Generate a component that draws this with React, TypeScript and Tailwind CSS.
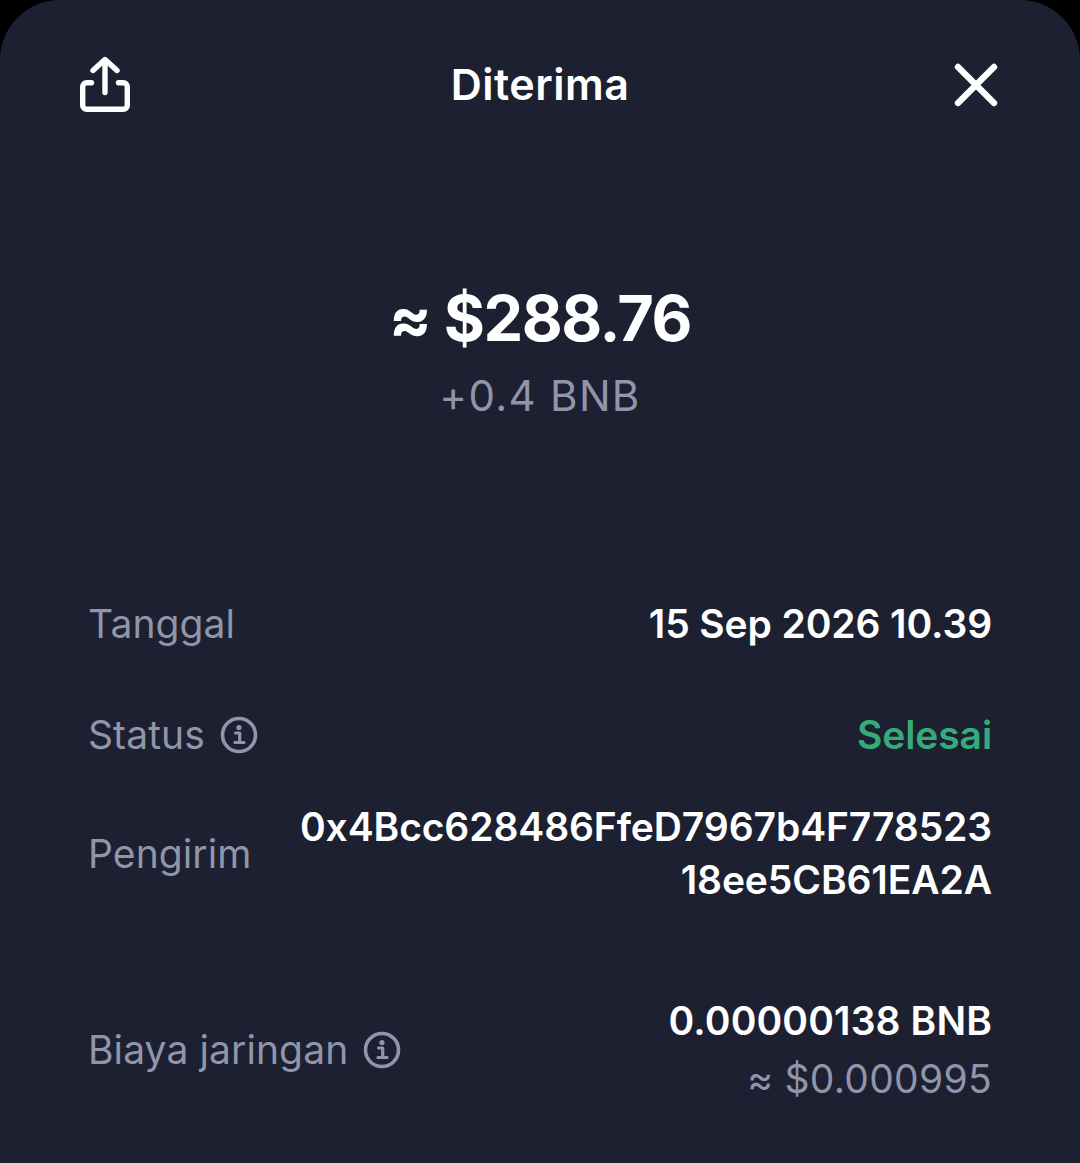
function InfoIcon() {
  return (
    <svg width="38" height="38" viewBox="0 0 38 38" fill="none" className="shrink-0">
      <circle cx="19" cy="19" r="16.5" stroke="#9095a9" strokeWidth="3.6" />
      <circle cx="19" cy="11.5" r="2.6" fill="#9095a9" />
      <path d="M15.5 17h4.2v9M15 26.5h9" stroke="#9095a9" strokeWidth="3.2" strokeLinecap="round" strokeLinejoin="round" />
    </svg>
  );
}

function Row({ className, label, info, children }: { className: string; label: string; info?: boolean; children: React.ReactNode }) {
  return (
    <div className={`flex items-center justify-between ${className}`}>
      <div className="flex items-center gap-[15px] whitespace-nowrap tracking-[0.1px] text-[#9095a9]">
        <span>{label}</span>
        {info && <InfoIcon />}
      </div>
      {children}
    </div>
  );
}

export default function App() {
  return (
    <div className="h-[1163px] w-[1080px] overflow-hidden bg-black font-['Inter',sans-serif]">
      <div className="h-[1200px] rounded-t-[60px] bg-[#1c2031] px-[88px] text-[39px] leading-[53px] tracking-[-0.1px]">
        <header className="-mx-[10px] grid h-[170px] grid-cols-[1fr_auto_1fr] items-center">
          <svg width="54" height="58" viewBox="0 0 54 58" fill="none" stroke="#ffffff" strokeWidth="5.4" strokeLinecap="round" strokeLinejoin="round">
            <path d="M27 36.5V4.5M15 14.5L27 3.5l12 11" />
            <path d="M13.5 26.7H8.7a4 4 0 0 0-4 4v18.6a4 4 0 0 0 4 4h36.6a4 4 0 0 0 4-4V30.7a4 4 0 0 0-4-4h-4.8" />
          </svg>
          <h1 className="-mt-[2px] text-[43px] font-semibold tracking-[0.5px] text-white">Diterima</h1>
          <svg width="46" height="46" viewBox="0 0 46 46" fill="none" stroke="#ffffff" strokeWidth="6.4" strokeLinecap="round" className="mr-[3px] justify-self-end">
            <path d="M5 5l36 36M41 5L5 41" />
          </svg>
        </header>

        <section className="mt-[110px] flex flex-col items-center">
          <div className="text-[63px] font-bold leading-[76px] tracking-[-1.5px] text-white">≈ $288.76</div>
          <div className="mt-[15px] text-[42px] leading-[50px] tracking-[1.3px] text-[#9095a9]">+0.4 BNB</div>
        </section>

        <section className="mt-[176px]">
          <Row className="h-[53px]" label="Tanggal">
            <span className="font-semibold text-white">15 Sep 2026 10.39</span>
          </Row>
          <Row className="mt-[58px] h-[53px]" label="Status" info>
            <span className="font-semibold text-[#35ab79]">Selesai</span>
          </Row>
          <Row className="mt-[39px]" label="Pengirim">
            <span className="w-[700px] break-all text-right font-semibold text-white">0x4Bcc628486FfeD7967b4F77852318ee5CB61EA2A</span>
          </Row>
          <Row className="mt-[88px]" label="Biaya jaringan" info>
            <div className="flex flex-col items-end font-semibold text-white">
              <span className="tracking-[0.12px]">0.00000138 BNB</span>
              <span className="mt-[5px] font-normal tracking-[0.3px] text-[#9095a9]">≈ $0.000995</span>
            </div>
          </Row>
        </section>
      </div>
    </div>
  );
}
